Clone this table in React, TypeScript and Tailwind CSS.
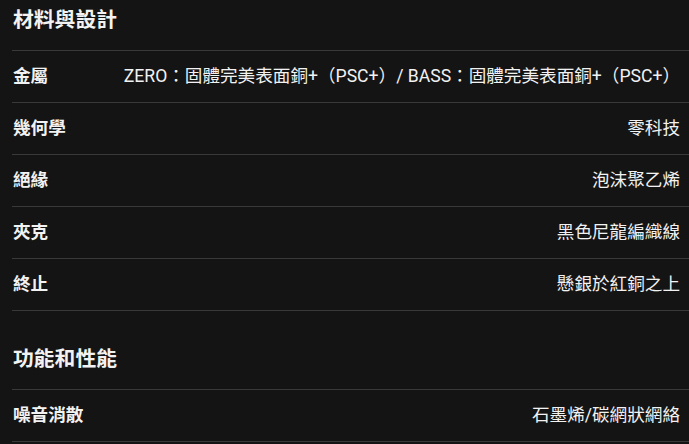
import React from 'react';

const sections = [
    {
        title: '材料與設計',
        rows: [
            { label: '金屬', value: 'ZERO：固體完美表面銅+（PSC+）/ BASS：固體完美表面銅+（PSC+）' },
            { label: '幾何學', value: '零科技' },
            { label: '絕緣', value: '泡沫聚乙烯' },
            { label: '夾克', value: '黑色尼龍編織線' },
            { label: '終止', value: '懸銀於紅銅之上' },
        ],
    },
    {
        title: '功能和性能',
        rows: [{ label: '噪音消散', value: '石墨烯/碳網狀網絡' }],
    },
];

const App = () => {
    return (
        <div
            className="min-h-screen w-[689px] h-[444px] overflow-hidden bg-[#141414] text-white"
            style={{ fontFamily: 'Roboto, "Noto Sans CJK TC", sans-serif' }}
        >
            {sections.map((section, i) => (
                <div key={section.title} className={`pl-3 ${i > 0 ? 'mt-[28px]' : ''}`}>
                    <h2 className="pl-px pt-[5px] pb-[15px] text-[20.8px] leading-[30px] font-bold text-[#f2f2f2]">
                        {section.title}
                    </h2>
                    {section.rows.map((row) => (
                        <div
                            key={row.label}
                            className="flex items-center justify-between h-[52px] border-t border-[#393939] pr-[9px] last:border-b last:h-[53px]"
                        >
                            <span className="pl-px text-[17.6px] font-bold text-[#f2f2f2] whitespace-nowrap">{row.label}</span>
                            <span className="text-[17.6px] text-[#f2f2f2] whitespace-nowrap text-right">{row.value}</span>
                        </div>
                    ))}
                </div>
            ))}
        </div>
    );
};

export default App;
